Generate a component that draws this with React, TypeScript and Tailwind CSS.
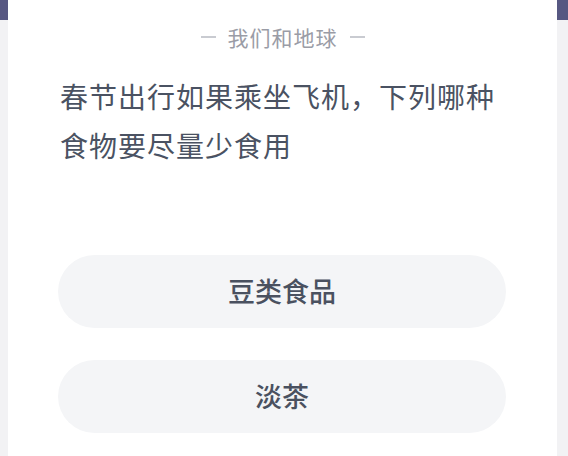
const options = ['豆类食品', '淡茶'];

export default function App() {
  return (
    <div
      className="h-[456px] w-[568px] overflow-hidden bg-[linear-gradient(#575882_20px,#f2f2f4_20px)] pl-[8px] pr-[11px]"
      style={{ fontFamily: '"Noto Sans CJK SC", "Noto Sans", sans-serif' }}
    >
      <div className="h-full bg-white">
        {/* Title */}
        <div className="flex items-center justify-center gap-[12px] pt-[24px] text-[21px] leading-[26px] tracking-[1px] text-[#9a9ca6]">
          <span className="h-[1.5px] w-[15px] bg-[#c9cbd1]"></span>
          <span>我们和地球</span>
          <span className="h-[1.5px] w-[15px] bg-[#c9cbd1]"></span>
        </div>

        {/* Question */}
        <p className="mt-[22px] pl-[52px] pr-[40px] text-[28px] leading-[49px] tracking-[1px] text-[#4a5262]">
          春节出行如果乘坐飞机，下列哪种
          <br />
          食物要尽量少食用
        </p>

        {/* Options */}
        <div className="mt-[85px] flex flex-col gap-[32px] pl-[50px] pr-[51px]">
          {options.map((o) => (
            <div
              key={o}
              className="flex h-[73px] items-center justify-center rounded-full bg-[#f4f5f7] text-[27px] font-medium text-[#4a5160]"
            >
              {o}
            </div>
          ))}
        </div>
      </div>
    </div>
  );
}
